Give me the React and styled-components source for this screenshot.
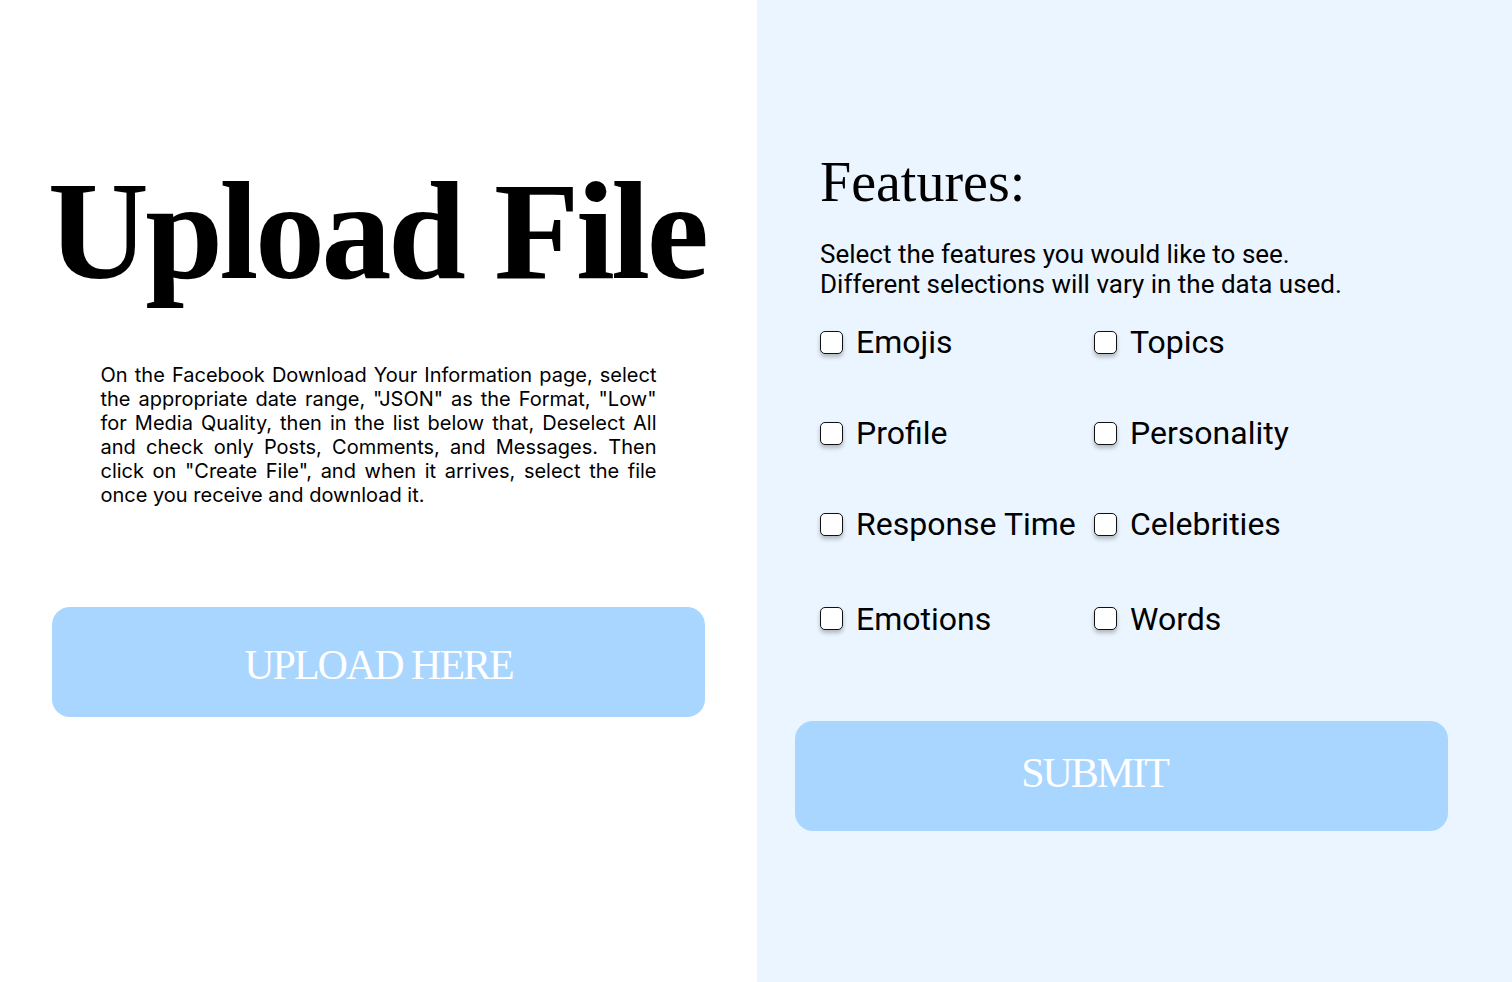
import React from "react";
import styled, { createGlobalStyle } from "styled-components";

const GlobalStyle = createGlobalStyle`
  * { box-sizing: border-box; }
  html, body { margin: 0; padding: 0; background: #ffffff; }
  body { font-family: "Roboto", "Liberation Sans", sans-serif; color: #000; }
`;

const Page = styled.main`
  display: grid;
  grid-template-columns: 757px 1fr;
  width: 1512px;
  height: 982px;
  overflow: hidden;
`;

const LeftPanel = styled.section`
  display: flex;
  flex-direction: column;
  align-items: center;
  padding-top: 161px;
  background: #ffffff;
`;

const Title = styled.h1`
  margin: 0 4px 0 0;
  font-family: "Liberation Serif", "DejaVu Serif", serif;
  font-weight: 700;
  font-size: 140px;
  line-height: 1;
  letter-spacing: -3.5px;
  color: #000;
`;

const Instructions = styled.p`
  margin: 62px 0 0;
  width: 556px;
  font-family: "Inter", "Roboto", sans-serif;
  font-size: 20px;
  line-height: 24px;
  text-align: justify;
  text-align-last: left;
  color: #000;
`;

const BigButton = styled.button`
  display: flex;
  align-items: center;
  justify-content: center;
  width: 653px;
  height: 110px;
  margin-top: ${(p) => p.$top}px;
  padding: ${(p) => p.$padTop || 0}px ${(p) => p.$shiftLeft || 0}px
    ${(p) => p.$padBottom || 0}px 0;
  border: none;
  border-radius: 18px;
  background: #a9d6fe;
  color: #ffffff;
  font-family: "Liberation Serif", "DejaVu Serif", serif;
  font-size: 42px;
  font-weight: 400;
  letter-spacing: -2px;
  cursor: pointer;
`;

const RightPanel = styled.section`
  display: flex;
  flex-direction: column;
  align-items: flex-start;
  padding: 154px 0 0 38px;
  background: #ebf5ff;
`;

const FeatureBlock = styled.div`
  display: flex;
  flex-direction: column;
  padding-left: 25px;
`;

const FeatureTitle = styled.h2`
  margin: 0;
  font-family: "Liberation Serif", "DejaVu Serif", serif;
  font-weight: 400;
  font-size: 56px;
  line-height: 1;
  color: #000;
`;

const Subtitle = styled.p`
  margin: 29px 0 0;
  font-family: "Roboto", sans-serif;
  font-size: 26px;
  line-height: 30px;
  color: #000;
`;

const OptionGrid = styled.div`
  display: grid;
  grid-template-columns: 274px auto;
  grid-auto-rows: 40px;
  row-gap: 51px;
  margin-top: 23px;
`;

const Option = styled.label`
  display: flex;
  align-items: center;
  gap: 13px;
  margin-top: ${(p) => (p.$shift ? p.$shift : 0)}px;
  font-family: "Roboto", sans-serif;
  font-size: 32px;
  line-height: 40px;
  color: #000;
  white-space: nowrap;
  cursor: pointer;
`;

const Box = styled.input`
  appearance: none;
  -webkit-appearance: none;
  flex: none;
  width: 23px;
  height: 23px;
  margin: 0;
  border: 1.5px solid #111;
  border-radius: 5px;
  background: #ffffff;
  box-shadow: 0 3px 4px rgba(0, 0, 0, 0.25);
  cursor: pointer;
  &:checked {
    background: #3b82f6;
  }
`;

const options = [
  ["Emojis", 0],
  ["Topics", 0],
  ["Profile", 0],
  ["Personality", 0],
  ["Response Time", 0],
  ["Celebrities", 0],
  ["Emotions", 7],
  ["Words", 7],
];

export default function App() {
  return (
    <>
      <GlobalStyle />
      <Page>
        <LeftPanel>
          <Title>Upload File</Title>
          <Instructions>
            On the Facebook Download Your Information page, select the
            appropriate date range, "JSON" as the Format, "Low" for Media
            Quality, then in the list below that, Deselect All and check only
            Posts, Comments, and Messages. Then click on "Create File", and when
            it arrives, select the file once you receive and download it.
          </Instructions>
          <BigButton $top={100} $padTop={5}>
            UPLOAD HERE
          </BigButton>
        </LeftPanel>
        <RightPanel>
          <FeatureBlock>
            <FeatureTitle>Features:</FeatureTitle>
            <Subtitle>
              Select the features you would like to see.
              <br />
              Different selections will vary in the data used.
            </Subtitle>
            <OptionGrid>
              {options.map(([name, shift]) => (
                <Option key={name} $shift={shift}>
                  <Box type="checkbox" />
                  {name}
                </Option>
              ))}
            </OptionGrid>
          </FeatureBlock>
          <BigButton $top={86} $shiftLeft={54} $padBottom={6}>
            SUBMIT
          </BigButton>
        </RightPanel>
      </Page>
    </>
  );
}
